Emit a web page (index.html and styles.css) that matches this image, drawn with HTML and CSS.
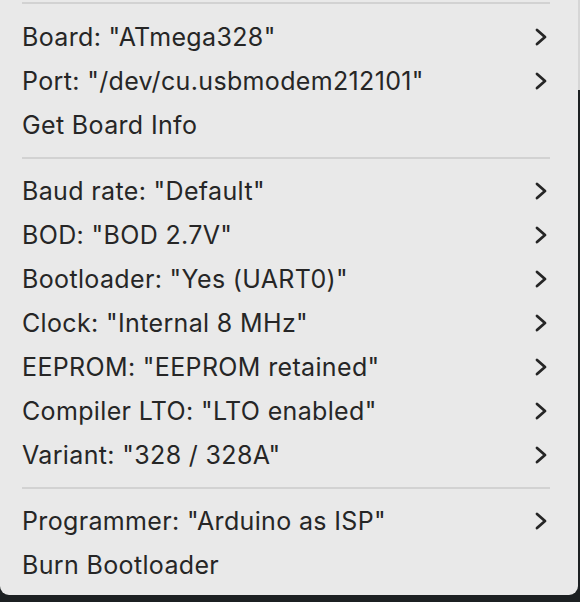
FILE: index.html
```html
<!DOCTYPE html>
<html>
<head>
<meta charset="utf-8">
<link rel="stylesheet" href="styles.css">
</head>
<body>
<div class="screen">
  <div class="menu">
    <div class="sep sep-top"></div>
    <div class="item"><span>Board: "ATmega328"</span><svg class="chev" viewBox="0 0 12 18"><path d="M2 2 L10 9 L2 16"/></svg></div>
    <div class="item"><span>Port: "/dev/cu.usbmodem212101"</span><svg class="chev" viewBox="0 0 12 18"><path d="M2 2 L10 9 L2 16"/></svg></div>
    <div class="item"><span>Get Board Info</span></div>
    <div class="sep"></div>
    <div class="item"><span>Baud rate: "Default"</span><svg class="chev" viewBox="0 0 12 18"><path d="M2 2 L10 9 L2 16"/></svg></div>
    <div class="item"><span>BOD: "BOD 2.7V"</span><svg class="chev" viewBox="0 0 12 18"><path d="M2 2 L10 9 L2 16"/></svg></div>
    <div class="item"><span>Bootloader: "Yes (UART0)"</span><svg class="chev" viewBox="0 0 12 18"><path d="M2 2 L10 9 L2 16"/></svg></div>
    <div class="item"><span>Clock: "Internal 8 MHz"</span><svg class="chev" viewBox="0 0 12 18"><path d="M2 2 L10 9 L2 16"/></svg></div>
    <div class="item"><span>EEPROM: "EEPROM retained"</span><svg class="chev" viewBox="0 0 12 18"><path d="M2 2 L10 9 L2 16"/></svg></div>
    <div class="item"><span>Compiler LTO: "LTO enabled"</span><svg class="chev" viewBox="0 0 12 18"><path d="M2 2 L10 9 L2 16"/></svg></div>
    <div class="item"><span>Variant: "328 / 328A"</span><svg class="chev" viewBox="0 0 12 18"><path d="M2 2 L10 9 L2 16"/></svg></div>
    <div class="sep"></div>
    <div class="item"><span>Programmer: "Arduino as ISP"</span><svg class="chev" viewBox="0 0 12 18"><path d="M2 2 L10 9 L2 16"/></svg></div>
    <div class="item"><span>Burn Bootloader</span></div>
  </div>
  <div class="edge"><div class="edge-top"></div></div>
</div>
</body>
</html>
```
FILE: styles.css
```css
html, body {
  margin: 0;
  padding: 0;
  background: #1c2022;
}
.screen {
  display: flex;
  width: 580px;
  height: 602px;
  align-items: flex-start;
}
.menu {
  width: 578px;
  height: 595px;
  box-sizing: border-box;
  background: #e9e9e9;
  border-radius: 0 0 9px 9px;
  padding: 2px 28px 0 22px;
  font-family: Inter, "Noto Sans", sans-serif;
  font-size: 25px;
  color: #262626;
  display: flex;
  flex-direction: column;
}
.edge {
  width: 2px;
}
.edge-top {
  height: 90px;
  background: #d6d6d6;
}
.item {
  height: 44px;
  display: flex;
  align-items: center;
  justify-content: space-between;
  letter-spacing: 0.35px;
}
.chev {
  width: 12px;
  height: 18px;
  margin-right: 3px;
  fill: none;
  stroke: #262626;
  stroke-width: 2.8;
  stroke-linecap: round;
  stroke-linejoin: round;
}
.sep {
  height: 2px;
  background: #d2d2d2;
  margin: 10px 0;
}
.sep-top {
  margin: 0 0 11px 0;
}
```
